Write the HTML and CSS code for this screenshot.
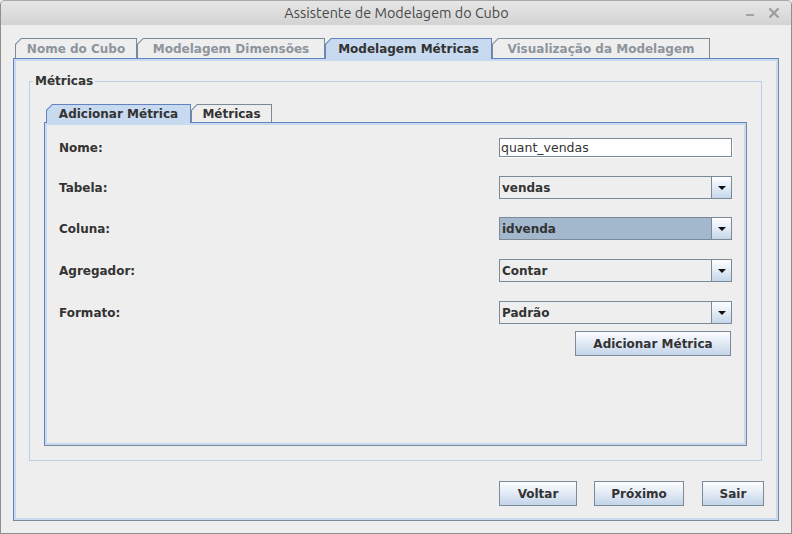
FILE: index.html
```html
<!DOCTYPE html>
<html lang="pt">
<head>
<meta charset="utf-8">
<title>Assistente de Modelagem do Cubo</title>
<link rel="stylesheet" href="styles.css">
</head>
<body>
<div class="window">
  <div class="titlebar">
    <span></span>
    <span class="title">Assistente de Modelagem do Cubo</span>
    <div class="controls">
      <svg class="ctl-min" width="8" height="2" viewBox="0 0 8 2"><rect width="8" height="2" fill="#a4a4a4"/></svg>
      <svg class="ctl-close" width="10" height="10" viewBox="0 0 10 10"><path d="M1 1 L9 9 M9 1 L1 9" stroke="#9d9d9d" stroke-width="2.2" stroke-linecap="square"/></svg>
    </div>
  </div>
  <div class="main">
    <div class="tabs main-tabs">
      <div class="tab disabled tab-nome"><span>Nome do Cubo</span></div>
      <div class="tab disabled tab-dim"><span>Modelagem Dimensões</span></div>
      <div class="tab selected tab-met"><span>Modelagem Métricas</span></div>
      <div class="tab disabled tab-vis"><span>Visualização da Modelagem</span></div>
    </div>
    <div class="tab-content main-content">
      <fieldset class="group">
        <legend>Métricas</legend>
        <div class="group-body">
          <div class="tabs inner-tabs">
            <div class="tab selected tab-add"><span>Adicionar Métrica</span></div>
            <div class="tab tab-list"><span>Métricas</span></div>
          </div>
          <div class="tab-content inner-content">
            <div class="form">
              <div class="row row-nome">
                <span class="label">Nome:</span>
                <div class="textfield">quant_vendas</div>
              </div>
              <div class="row row-tabela">
                <span class="label">Tabela:</span>
                <div class="combo"><span class="combo-value">vendas</span><span class="combo-arrow"><svg width="8" height="4" viewBox="0 0 8 4"><path d="M0 0 H8 L4 4 Z" fill="#111"/></svg></span></div>
              </div>
              <div class="row row-coluna">
                <span class="label">Coluna:</span>
                <div class="combo focused"><span class="combo-value">idvenda</span><span class="combo-arrow"><svg width="8" height="4" viewBox="0 0 8 4"><path d="M0 0 H8 L4 4 Z" fill="#111"/></svg></span></div>
              </div>
              <div class="row row-agreg">
                <span class="label">Agregador:</span>
                <div class="combo"><span class="combo-value">Contar</span><span class="combo-arrow"><svg width="8" height="4" viewBox="0 0 8 4"><path d="M0 0 H8 L4 4 Z" fill="#111"/></svg></span></div>
              </div>
              <div class="row row-formato">
                <span class="label">Formato:</span>
                <div class="combo"><span class="combo-value">Padrão</span><span class="combo-arrow"><svg width="8" height="4" viewBox="0 0 8 4"><path d="M0 0 H8 L4 4 Z" fill="#111"/></svg></span></div>
              </div>
              <div class="row-button">
                <button class="btn btn-add">Adicionar Métrica</button>
              </div>
            </div>
          </div>
        </div>
      </fieldset>
      <div class="actions">
        <button class="btn btn-voltar">Voltar</button>
        <button class="btn btn-proximo">Próximo</button>
        <button class="btn btn-sair">Sair</button>
      </div>
    </div>
  </div>
</div>
</body>
</html>
```

FILE: styles.css
```css
* { box-sizing: border-box; }
html, body { margin: 0; padding: 0; }
body {
  width: 792px;
  height: 534px;
  overflow: hidden;
  background: #eeeeee;
  font-family: "DejaVu Sans", sans-serif;
  font-size: 12px;
  color: #333333;
}

.window {
  width: 792px;
  height: 534px;
  border: 1px solid #8f8f8f;
  border-top-color: #a8a8a8;
  border-radius: 5px 5px 0 0;
  background: #eeeeee;
  display: flex;
  flex-direction: column;
  overflow: hidden;
}

.titlebar {
  flex: none;
  height: 24px;
  background: linear-gradient(#e6e6e6, #d3d3d3);
  display: grid;
  grid-template-columns: 1fr auto 1fr;
  align-items: center;
}
.title {
  font-family: "Ubuntu", "DejaVu Sans Condensed", "Liberation Sans Narrow", "Liberation Sans", sans-serif;
  font-size: 14.4px;
  color: #4a4a4a;
  padding-left: 1px;
}
.controls {
  display: flex;
  justify-content: flex-end;
  align-items: center;
  gap: 15px;
  padding-right: 12px;
}
.ctl-min { margin-top: 4px; }

.main {
  flex: 1;
  padding: 13px 0 0 12px;
}

.tabs {
  display: flex;
  align-items: flex-start;
}
.main-tabs { height: 20px; margin-left: 2px; }
.inner-tabs { height: 18px; margin-left: 2px; }

.tab {
  flex: none;
  background: #7a8a99;
  padding: 1px 1px 0 1px;
  clip-path: polygon(0 6px, 6px 0, 100% 0, 100% 100%, 0 100%);
  font-weight: bold;
  color: #333333;
}
.tab > span {
  display: flex;
  height: 100%;
  align-items: center;
  justify-content: center;
  background: #eeeeee;
  clip-path: polygon(0 5.4px, 5.4px 0, 100% 0, 100% 100%, 0 100%);
  white-space: nowrap;
}
.tab.disabled { color: #8d949c; }
.tab.selected {
  position: relative;
  z-index: 1;
  background: #6382bf;
}
.tab.selected > span { background: #c8daf0; }

.main-tabs .tab { height: 20px; }
.main-tabs .tab.selected { height: 21px; }
.main-tabs .tab.selected > span { padding-bottom: 1px; }
.inner-tabs .tab { height: 18px; }
.inner-tabs .tab.selected { height: 19px; }
.inner-tabs .tab.selected > span { padding-bottom: 1px; }

.tab-nome { width: 122px; }
.tab-dim { width: 188px; }
.tab-met { width: 167px; }
.tab-vis { width: 218px; }
.tab-add { width: 145px; }
.tab-list { width: 81px; }

.tab-content {
  border: 1px solid;
  border-color: #6382bf #7a8a99 #7a8a99 #6382bf;
  box-shadow: inset 0 0 0 2px #c8daf0;
  background: #eeeeee;
}

.main-content {
  width: 766px;
  height: 463px;
  padding: 15px 16px 0 15px;
}

.group {
  margin: 0;
  padding: 0;
  min-width: 0;
  height: 387px;
  border: 1px solid #bcd1e7;
}
.group legend {
  margin-left: 3px;
  padding: 0 2px;
  font-weight: bold;
  font-size: 12px;
  line-height: 14px;
  color: #333333;
}
.group-body {
  padding: 16px 14px 14px 14px;
}

.inner-content {
  height: 324px;
  padding: 15px 14px 0 14px;
}

.form {
  display: flex;
  flex-direction: column;
}
.row {
  display: flex;
  justify-content: space-between;
  align-items: center;
}
.row-nome { height: 19px; }
.row-tabela { height: 23px; margin-top: 19px; }
.row-coluna { height: 23px; margin-top: 18px; }
.row-agreg { height: 23px; margin-top: 19px; }
.row-formato { height: 23px; margin-top: 19px; }
.row-button {
  display: flex;
  justify-content: flex-end;
  margin-top: 7px;
  padding-right: 1px;
}

.label {
  font-weight: bold;
  color: #333333;
}

.textfield {
  width: 233px;
  height: 19px;
  border: 1px solid #7a8a99;
  background: #ffffff;
  box-shadow: 1px 1px 0 #ffffff;
  padding: 0 1px;
  font-size: 12.5px;
  line-height: 17px;
  color: #333333;
  white-space: nowrap;
}

.combo {
  width: 233px;
  height: 23px;
  border: 1px solid #7a8a99;
  display: flex;
  background: #eeeeee;
}
.combo-value {
  flex: 1;
  display: flex;
  align-items: center;
  padding-left: 2px;
  font-weight: bold;
  color: #333333;
}
.combo.focused .combo-value { background: #a3b8cc; }
.combo-arrow {
  flex: none;
  width: 20px;
  border-left: 1px solid #7a8a99;
  background: linear-gradient(#fdfeff 0%, #e6eef7 45%, #c5d6ea 100%);
  display: flex;
  align-items: center;
  justify-content: center;
  padding-top: 1px;
}

.btn {
  height: 25px;
  border: 1px solid #7a8a99;
  background: linear-gradient(#fbfcfe 0%, #e4ecf6 45%, #c3d4e9 100%);
  font-family: "DejaVu Sans", sans-serif;
  font-weight: bold;
  font-size: 12px;
  color: #333333;
  padding: 0;
  margin: 0;
}
.btn-add { width: 156px; }
.btn-voltar { width: 78px; }
.btn-proximo { width: 90px; }
.btn-sair { width: 62px; }

.actions {
  display: flex;
  justify-content: flex-end;
  gap: 17px;
  margin-top: 20px;
  margin-right: -2px;
}
.btn-proximo { margin-right: 1px; }
```
